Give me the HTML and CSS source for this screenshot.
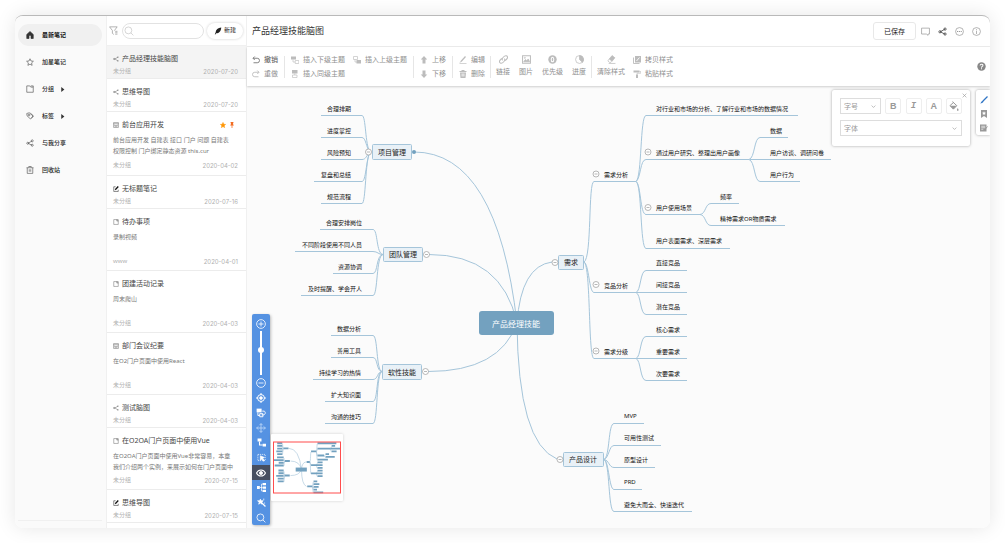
FILE: index.html
```html
<!DOCTYPE html>
<html lang="zh-CN">
<head>
<meta charset="utf-8">
<title>产品经理技能脑图</title>
<link rel="stylesheet" href="styles.css">
</head>
<body>
<svg class="sprite" aria-hidden="true">
  <symbol id="i-home" viewBox="0 0 16 16"><path fill="currentColor" d="M8 1 1.500 7v8h4.500v-4.500a2 2 0 0 1 4 0V15h4.500V7z"/></symbol>
  <symbol id="i-star" viewBox="0 0 16 16"><path d="m8 1.500 2 4.500 4.800.5-3.600 3.300 1 4.900L8 12.300l-4.200 2.400 1-4.900L1.200 6.500 6 6z"/></symbol>
  <symbol id="i-folder" viewBox="0 0 16 16"><path d="M1.500 1.800h6l2 2.400h5v10.300h-13zM9.500 1.800h5v2.400"/></symbol>
  <symbol id="i-tag" viewBox="0 0 16 16"><path d="M1.500 3 6.500 1.500 14 8l-5 6-7-6.500zM9 2.500l6 5.300-4 5"/><circle cx="6" cy="6" r="1.800"/></symbol>
  <symbol id="i-share" viewBox="0 0 16 16"><path d="M4 8.500 12 4M4 8.500l8 4"/><circle cx="3.500" cy="8.500" r="2"/><circle cx="12.500" cy="3.700" r="2"/><circle cx="12.500" cy="12.500" r="2"/></symbol>
  <symbol id="i-trash" viewBox="0 0 16 16"><path d="M1 3.500h14M5.500 3V1h5v2M2.500 3.500v11.300h11V3.500M6.500 6.500v5M9.500 6.500v5"/></symbol>
  <symbol id="i-caret" viewBox="0 0 8 8"><path fill="currentColor" stroke="none" d="M2 0l5 4-5 4z"/></symbol>
  <symbol id="i-filter" viewBox="0 0 16 16"><path d="M10 8.500V7.500L14.500 1.500H1L6 8v5l2.500 2M11 9.500h4M11 12h4M11 14.500h4"/></symbol>
  <symbol id="i-search" viewBox="0 0 16 16"><circle cx="7" cy="7" r="5.500"/><path d="m11 11 4 4"/></symbol>
  <symbol id="i-quill" viewBox="0 0 16 16"><path fill="currentColor" stroke="none" d="M14.500.8C8 1.500 3.500 5 3.200 11L1.500 14.500l1.200.7L4.300 12.600c6-.2 9.700-4.600 10.200-11.800z"/></symbol>
  <symbol id="i-map" viewBox="0 0 16 16"><path d="M4 8 13 3.500M4 8h1l8 5"/><circle cx="3" cy="8" r="1.800"/><path d="M11.500 3h3M11.500 13h3" stroke-width="2.600"/></symbol>
  <symbol id="i-doc" viewBox="0 0 16 16"><path d="M1.500 1.500h13v13h-13zM1.500 4.500h13M4.500 11V7.500L8 10l3.500-2.500V11M4.500 12.500h7"/></symbol>
  <symbol id="i-page" viewBox="0 0 16 16"><path d="M2 1.500h12v13H2zM10 1.500v4h4M10 2.500l4 2"/></symbol>
  <symbol id="i-edit" viewBox="0 0 16 16"><path d="M7 2H2v12.500h12V10"/><path stroke-width="3.500" d="m6 10 8-8.500"/></symbol>
  <symbol id="i-starfill" viewBox="0 0 16 16"><path fill="currentColor" d="m8 1 2 5 5 .4-3.800 3.300L12.400 15 8 12.200 3.600 15l1.200-5.300L1 6.400 6 6z"/></symbol>
  <symbol id="i-pin" viewBox="0 0 16 16"><path fill="currentColor" stroke="none" d="M4 0h8v2h-1v4l2 3H9v7H7V9H3l2-3V2H4z"/></symbol>
  <symbol id="i-chat" viewBox="0 0 16 16"><path d="M1 2h14v10.500h-2.500v2.300l-3-2.300H1z"/></symbol>
  <symbol id="i-more" viewBox="0 0 16 16"><circle cx="8" cy="8" r="7"/><path d="M3.500 8h9" stroke-width="2" stroke-dasharray="2 1.300"/></symbol>
  <symbol id="i-info" viewBox="0 0 16 16"><circle cx="8" cy="8" r="7"/><path d="M8 3.500v1.500M8 6.500v6"/></symbol>
  <symbol id="i-help" viewBox="0 0 16 16"><circle cx="8" cy="8" r="7.500" fill="currentColor" stroke="none"/><path stroke="#fff" stroke-width="1.800" d="M5.500 6.300C5.500 3 10.700 3.200 10.500 6c0 1.800-2.500 1.800-2.500 4M8 11.300v1.700"/></symbol>
  <symbol id="i-undo" viewBox="0 0 16 16"><path stroke-width="1.800" d="M5.500 1 2 4.500 5.500 8M2 4.500h8.500a4.500 4.500 0 0 1 0 9H3"/></symbol>
  <symbol id="i-redo" viewBox="0 0 16 16"><path stroke-width="1.800" d="M10.500 1 14 4.500 10.500 8M14 4.500H5.500a4.500 4.500 0 0 0 0 9H13"/></symbol>
  <symbol id="i-child" viewBox="0 0 16 16"><path fill="currentColor" stroke="none" d="M0 1h10v6H0z"/><path d="M4 7v5h4M8.500 9h7v6h-7z"/></symbol>
  <symbol id="i-sibling" viewBox="0 0 16 16"><path fill="currentColor" stroke="none" d="M2 0h11v7H2z"/><path d="M7.500 7v3M3 10h9v5H3z"/></symbol>
  <symbol id="i-parent" viewBox="0 0 16 16"><path d="M1 1h8v6H1zM4 7v5h4"/><path fill="currentColor" stroke="none" d="M7 8h9v7H7z"/></symbol>
  <symbol id="i-up" viewBox="0 0 16 16"><path fill="currentColor" stroke="none" d="m8 0 6.500 7H11v8H5V7H1.500z"/></symbol>
  <symbol id="i-down" viewBox="0 0 16 16"><path fill="currentColor" stroke="none" d="m8 16 6.500-7H11V1H5v8H1.500z"/></symbol>
  <symbol id="i-pencil" viewBox="0 0 16 16"><path stroke-width="2.500" d="m4 11 9-10"/><path d="M2 13.500 4 10M1 15h14"/></symbol>
  <symbol id="i-bin" viewBox="0 0 16 16"><path fill="currentColor" stroke="none" d="M5 0h6v2h4v2H1V2h4zM2 5h12l-1 11H3z"/><path stroke="#fff" d="M6 7v6M8 7v6M10 7v6"/></symbol>
  <symbol id="i-link" viewBox="0 0 16 16"><path stroke-width="1.800" d="M6.500 9.500c-3-3 3.500-9 6.500-8s3 4 0 6.500l-2 1.800M9.500 6.500c3 3-3.500 9-6.500 8s-3-4 0-6.500l2-1.800"/></symbol>
  <symbol id="i-image" viewBox="0 0 16 16"><path stroke-width="1.800" d="M1 1.500h14v13H1z"/><path fill="currentColor" d="m3 12 3-4 2.500 2L11 7l2.500 5z"/><circle cx="5" cy="5" r="1"/></symbol>
  <symbol id="i-priority" viewBox="0 0 16 16"><circle cx="8" cy="8" r="7.500" fill="currentColor" stroke="none"/><ellipse cx="8" cy="8" rx="2.300" ry="4" stroke="#fff" stroke-width="1.800"/></symbol>
  <symbol id="i-progress" viewBox="0 0 16 16"><circle cx="8" cy="8" r="7"/><path fill="currentColor" d="M8 1a7 7 0 0 1 5 12L8 8z"/></symbol>
  <symbol id="i-eraser" viewBox="0 0 16 16"><path fill="currentColor" d="m9 1 5 4-5 6-5-4z"/><path d="m4 7-2.500 3.500L4 13h3l2-2M3 15h12"/></symbol>
  <symbol id="i-copy" viewBox="0 0 16 16"><path fill="currentColor" stroke="none" d="M4 0h12v13H4z"/><path stroke-width="1.800" d="M1 3v12h12"/><path stroke="#fff" stroke-width="1.800" d="m7 10 6-7"/></symbol>
  <symbol id="i-roller" viewBox="0 0 16 16"><path fill="currentColor" stroke="none" d="M1 1h12v4H1zM6 9h4v7H6z"/><path d="M13 3h2.500v3.500H8V9"/></symbol>
  <symbol id="i-chev" viewBox="0 0 8 8"><path d="m1 2.500 3 3 3-3"/></symbol>
  <symbol id="i-close" viewBox="0 0 8 8"><path d="m1 1 6 6M7 1 1 7"/></symbol>
  <symbol id="i-fill" viewBox="0 0 16 16"><path stroke-width="1.600" d="M5.500 1 12.500 7.500 7 13 1.500 7.500 7.500 2"/><path fill="currentColor" stroke="none" d="M2 7.500h10L7 13zM14 11c2 3 1.500 4.500 0 4.500s-2-1.500 0-4.500z"/></symbol>
  <symbol id="i-brush" viewBox="0 0 16 16"><path stroke-width="2.600" d="M6 10 15 1"/><path fill="currentColor" stroke="none" d="M6.500 9c1.500 2 0 5-6 6 2-1.500 1.500-5 6-6z"/></symbol>
  <symbol id="i-mark" viewBox="0 0 16 16"><path fill="currentColor" stroke="none" d="M2 0h12v16l-6-4-6 4z"/><path fill="#fff" stroke="none" d="m8 2.500 1.200 2.700 2.800.2-2.100 1.900.6 2.700L8 8.500 5.500 10l.6-2.700L4 5.400l2.800-.2z"/></symbol>
  <symbol id="i-note" viewBox="0 0 16 16"><path fill="currentColor" stroke="none" d="M0 1h13v14H0z"/><path stroke="#fff" d="M2.500 4.500h8M2.500 7.500h8M2.500 10.500h4"/><path stroke-width="2" d="m9 12 6-7"/></symbol>
  <symbol id="i-plus" viewBox="0 0 16 16"><circle cx="8" cy="8" r="7"/><path d="M4 8h8M8 4v8"/></symbol>
  <symbol id="i-minus" viewBox="0 0 16 16"><circle cx="8" cy="8" r="7"/><path d="M4 8h8"/></symbol>
  <symbol id="i-target" viewBox="0 0 16 16"><circle cx="8" cy="8" r="5.500" stroke-width="1.600"/><circle cx="8" cy="8" r="2.200" fill="currentColor"/><path stroke-width="1.600" d="M8 0v3M8 13v3M0 8h3M13 8h3"/></symbol>
  <symbol id="i-drag" viewBox="0 0 16 16"><path fill="currentColor" stroke="none" d="M1 1h8v6H1z"/><path stroke-width="1.500" d="M3 7v5h3M10 5h3c3 1 2 6-1 6H9M6 9h5v5H6z"/></symbol>
  <symbol id="i-move" viewBox="0 0 16 16"><path stroke-width="1.600" d="M8 1v14M1 8h14M5.500 3.500 8 1l2.500 2.500M5.500 12.500 8 15l2.500-2.500M3.500 5.500 1 8l2.500 2.500M12.500 5.500 15 8l-2.500 2.500"/></symbol>
  <symbol id="i-step" viewBox="0 0 16 16"><path fill="currentColor" stroke="none" d="M1 1h7v5H1zM10 10h6v5h-6z"/><path stroke-width="2" d="M4.500 6v6.500H10"/></symbol>
  <symbol id="i-select" viewBox="0 0 16 16"><path stroke-dasharray="2 1.500" d="M1.500 2.500h13v11h-13z"/><path fill="currentColor" d="m6 5 7 3-3 1.500 3 4-1.500 1-3-4L6 13z"/></symbol>
  <symbol id="i-eye" viewBox="0 0 16 16"><path stroke-width="1.700" d="M.8 8C4 1.500 12 1.500 15.200 8 12 14.500 4 14.500.8 8z"/><circle cx="8" cy="8" r="2.500" fill="currentColor"/></symbol>
  <symbol id="i-tree" viewBox="0 0 16 16"><path fill="currentColor" stroke="none" d="M0 5.500h5v5H0zM10 0h6v4h-6zM10 6h6v4h-6zM10 12h6v4h-6z"/><path d="M5 8h5M10 2H8v12h2"/></symbol>
  <symbol id="i-wand" viewBox="0 0 16 16"><path stroke-width="2.200" d="m7 7 8 8"/><path fill="currentColor" d="m6 2 1.200 3L11 5 8 7.500l1 3.500-3-2-3 2 1-3.500L1 5h3.800zM12 1v3M13.500 8v2"/></symbol>
</svg>

<div class="app">
  <nav class="side">
    <a class="side-item active" href="#"><svg class="ico"><use href="#i-home"/></svg>最新笔记</a>
    <a class="side-item" href="#"><svg class="ico"><use href="#i-star"/></svg>加星笔记</a>
    <a class="side-item" href="#"><svg class="ico"><use href="#i-folder"/></svg>分组<svg class="caret"><use href="#i-caret"/></svg></a>
    <a class="side-item" href="#"><svg class="ico"><use href="#i-tag"/></svg>标签<svg class="caret"><use href="#i-caret"/></svg></a>
    <a class="side-item" href="#"><svg class="ico"><use href="#i-share"/></svg>与我分享</a>
    <a class="side-item" href="#"><svg class="ico"><use href="#i-trash"/></svg>回收站</a>
    <div class="side-foot"></div>
  </nav>

  <section class="list">
    <div class="list-head">
      <button class="plain" aria-label="筛选"><svg class="ico-lg"><use href="#i-filter"/></svg></button>
      <label class="search"><svg class="ico-xl"><use href="#i-search"/></svg><input type="search" aria-label="搜索"></label>
      <button class="new"><svg class="ico"><use href="#i-quill"/></svg>新建</button>
    </div>
    <div class="notes">
      <article class="note selected"><h2><svg class="ico-sm"><use href="#i-map"/></svg>产品经理技能脑图</h2><footer><span>未分组</span><time>2020-07-20</time></footer></article>
      <article class="note"><h2><svg class="ico-sm"><use href="#i-map"/></svg>思维导图</h2><footer><span>未分组</span><time>2020-07-20</time></footer></article>
      <article class="note tall pinned"><h2><svg class="ico-sm"><use href="#i-doc"/></svg>前台应用开发<span class="flags"><svg class="ico-sm"><use href="#i-starfill"/></svg><svg class="ico-sm pin"><use href="#i-pin"/></svg></span></h2><p>前台应用开发 自建表 接口 门户 问题 自建表<br>权限控制 门户绑定静态资源 this.cur</p><footer><span>未分组</span><time>2020-04-02</time></footer></article>
      <article class="note"><h2><svg class="ico-sm dark"><use href="#i-edit"/></svg>无标题笔记</h2><footer><span>未分组</span><time>2020-07-16</time></footer></article>
      <article class="note tall"><h2><svg class="ico-sm"><use href="#i-page"/></svg>待办事项</h2><p>录制视频</p><footer><span>www</span><time>2020-04-01</time></footer></article>
      <article class="note tall"><h2><svg class="ico-sm"><use href="#i-page"/></svg>团建活动记录</h2><p>周末爬山</p><footer><span>未分组</span><time>2020-04-03</time></footer></article>
      <article class="note tall"><h2><svg class="ico-sm"><use href="#i-doc"/></svg>部门会议纪要</h2><p>在O2门户页面中使用React</p><footer><span>未分组</span><time>2020-04-03</time></footer></article>
      <article class="note"><h2><svg class="ico-sm"><use href="#i-map"/></svg>测试脑图</h2><footer><span>未分组</span><time>2020-04-03</time></footer></article>
      <article class="note tall"><h2><svg class="ico-sm"><use href="#i-page"/></svg>在O2OA门户页面中使用Vue</h2><p>在O2OA门户页面中使用Vue非常容易，本章<br>我们介绍两个实例，来展示如何在门户页面中</p><footer><span>未分组</span><time>2020-07-15</time></footer></article>
      <article class="note"><h2><svg class="ico-sm dark"><use href="#i-edit"/></svg>思维导图</h2><footer><span>未分组</span><time>2020-07-15</time></footer></article>
    </div>
  </section>

  <main class="main">
    <header class="head">
      <h1>产品经理技能脑图</h1>
      <button class="saved">已保存</button>
      <div class="head-icons">
        <button class="plain" aria-label="评论"><svg class="ico-lg"><use href="#i-chat"/></svg></button>
        <button class="plain dark" aria-label="分享"><svg class="ico-lg"><use href="#i-share"/></svg></button>
        <button class="plain" aria-label="更多"><svg class="ico-lg"><use href="#i-more"/></svg></button>
        <button class="plain" aria-label="信息"><svg class="ico-lg"><use href="#i-info"/></svg></button>
      </div>
    </header>

    <div class="tools">
      <div class="stack"><button class="tool on"><svg class="ico"><use href="#i-undo"/></svg>撤销</button><button class="tool"><svg class="ico"><use href="#i-redo"/></svg>重做</button></div>
      <i class="sep"></i>
      <div class="stack"><button class="tool"><svg class="ico"><use href="#i-child"/></svg>插入下级主题</button><button class="tool"><svg class="ico"><use href="#i-sibling"/></svg>插入同级主题</button></div>
      <div class="stack next"><button class="tool"><svg class="ico"><use href="#i-parent"/></svg>插入上级主题</button></div>
      <i class="sep"></i>
      <div class="stack"><button class="tool"><svg class="ico"><use href="#i-up"/></svg>上移</button><button class="tool"><svg class="ico"><use href="#i-down"/></svg>下移</button></div>
      <i class="sep"></i>
      <div class="stack"><button class="tool"><svg class="ico"><use href="#i-pencil"/></svg>编辑</button><button class="tool"><svg class="ico"><use href="#i-bin"/></svg>删除</button></div>
      <i class="sep tight"></i>
      <div class="wide">
        <button class="tool big"><svg class="ico-lg"><use href="#i-link"/></svg>链接</button>
        <button class="tool big"><svg class="ico-lg"><use href="#i-image"/></svg>图片</button>
        <button class="tool big"><svg class="ico-lg"><use href="#i-priority"/></svg>优先级</button>
        <button class="tool big"><svg class="ico-lg"><use href="#i-progress"/></svg>进度</button>
      </div>
      <i class="sep tight"></i>
      <button class="tool big"><svg class="ico-lg"><use href="#i-eraser"/></svg>清除样式</button>
      <div class="stack next"><button class="tool"><svg class="ico"><use href="#i-copy"/></svg>拷贝样式</button><button class="tool"><svg class="ico"><use href="#i-roller"/></svg>粘贴样式</button></div>
      <button class="plain help" aria-label="帮助"><svg class="ico-lg"><use href="#i-help"/></svg></button>
    </div>

    <div class="canvas">
      <svg class="map" width="743" height="442" viewBox="247 86 743 442">
        <defs>
          <path id="leaves" d="M321 115.500H362M321 137.500H362M321 159.500H362M314 181.500H362M321 203.500H362
            M320 229.500H373M295 251.500H373M333 273.500H373M301 295.500H373
            M331 335.500H373M331 357.500H373M313 379.500H373M325 401.500H373M325 423.500H373
            M594 181.500H636M594 292.500H636M594 358.500H636
            M646 115.500H798M646 159.500H749M646 214.500H700M646 248.500H730
            M760 137.500H788M750 159.500H831M760 181.500H800M711 203.500H739M711 225.500H785
            M646 270.500H687M636 292.500H687M646 314.500H687M646 336.500H687M636 358.500H687M646 380.500H687
            M614 423.500H644M614 445.500H661M614 467.500H655M614 489.500H642M614 511.500H692"/>
          <path id="links" d="M362 115.500C366 115.500 365 145 370 152M362 137.500C366 137.500 366 148 370 152M362 159.500C366 159.500 366 156 370 152M362 181.500C366 181.500 366 160 370 152M362 203.500C366 203.500 365 160 370 152
            M373 229.500C378 229.500 376 254 383 254.500M373 251.500C378 251.500 378 254.500 383 254.500M373 273.500C378 273.500 376 255 383 254.500M373 295.500C378 295.500 376 255 383 254.500
            M373 335.500C378 335.500 376 371 382 371.500M373 357.500C378 357.500 376 371 382 371.500M373 379.500C378 379.500 377 372 382 371.500M373 401.500C378 401.500 376 372 382 371.500M373 423.500C378 423.500 376 372 382 371.500
            M584 262C592 258 588 181.500 594 181.500M584 262C589 264 589 292.500 594 292.500M584 262C591 266 588 358.500 594 358.500
            M636 181.500C642 178 640 115.500 646 115.500M636 181.500C641 178 640 159.500 646 159.500M636 181.500C641 184 640 214.500 646 214.500M636 181.500C642 184 640 248.500 646 248.500
            M749 159.500C755 158 754 137.500 760 137.500M749 159.500C755 161 754 181.500 760 181.500
            M700 214.500C706 214 705 203.500 711 203.500M700 214.500C706 215 705 225.500 711 225.500
            M636 292.500C641 291 640 270.500 646 270.500M636 292.500C641 294 640 314.500 646 314.500M636 358.500C641 357 640 336.500 646 336.500M636 358.500C641 360 640 380.500 646 380.500
            M604 459.500C610 457 608 423.500 614 423.500M604 459.500C609 458 609 445.500 614 445.500M604 459.500C609 460 609 467.500 614 467.500M604 459.500C609 461 609 489.500 614 489.500M604 459.500C610 462 608 511.500 614 511.500
            M517 323Q497 152 414 152M517 323Q502 254.500 429 254.500M517 323Q500 371.500 428 371.500M517 323Q521 266 552 262M517 323Q518 443 557 459"/>
        </defs>
        <use class="wire" href="#leaves"/>
        <use class="wire" href="#links"/>
        <g class="hub">
          <rect x="372.500" y="144.500" width="39" height="15" rx="1"/><rect x="383.500" y="247.500" width="39" height="14" rx="1"/><rect x="382.500" y="364.500" width="39" height="15" rx="1"/><rect x="558.500" y="255.500" width="25" height="14" rx="1"/><rect x="563.500" y="452.500" width="40" height="14" rx="1"/>
        </g>
        <circle class="dot" cx="414" cy="152" r="2"/>
        <rect class="root" x="479" y="311" width="75" height="24" rx="3"/>
        <text class="root-text" x="516" y="327">产品经理技能</text>
        <g class="hub-text"><text x="392" y="155">项目管理</text><text x="403" y="257">团队管理</text><text x="402" y="375">软性技能</text><text x="571" y="265">需求</text><text x="583" y="462">产品设计</text></g>
        <g class="leaf end">
          <text x="351" y="111">合理排期</text><text x="351" y="133">进度掌控</text><text x="351" y="155">风险预知</text><text x="351" y="177">复盘和总结</text><text x="351" y="199">规范流程</text>
          <text x="362" y="225">合理安排岗位</text><text x="362" y="247">不同阶段使用不同人员</text><text x="362" y="269">资源协调</text><text x="362" y="291">及时提醒、学会开人</text>
          <text x="361" y="331">数据分析</text><text x="361" y="353">善用工具</text><text x="361" y="375">持续学习的热情</text><text x="361" y="397">扩大知识面</text><text x="361" y="419">沟通的技巧</text>
        </g>
        <g class="leaf">
          <text x="604" y="177">需求分析</text><text x="604" y="288">竞品分析</text><text x="604" y="354">需求分级</text>
          <text x="656" y="111">对行业和市场的分析、了解行业和市场的数据情况</text><text x="656" y="155">通过用户研究、整理出用户画像</text><text x="656" y="210">用户使用场景</text><text x="656" y="243">用户表面需求、深层需求</text>
          <text x="770" y="133">数据</text><text x="770" y="155">用户访谈、调研问卷</text><text x="770" y="177">用户行为</text><text x="720" y="199">频率</text><text x="720" y="221">精神需求OR物质需求</text>
          <text x="656" y="265">直接竞品</text><text x="656" y="287">间接竞品</text><text x="656" y="309">潜在竞品</text><text x="656" y="332">核心需求</text><text x="656" y="354">重要需求</text><text x="656" y="376">次要需求</text>
          <text x="624" y="418">MVP</text><text x="624" y="440">可用性测试</text><text x="624" y="462">原型设计</text><text x="624" y="484">PRD</text><text x="624" y="507">避免大而全、快速迭代</text>
        </g>
        <g class="toggle">
          <circle cx="368.500" cy="152" r="3"/><circle cx="426.500" cy="254.500" r="3"/><circle cx="425.500" cy="371.500" r="3"/><circle cx="555" cy="262.500" r="3"/><circle cx="560" cy="459.500" r="3"/><circle cx="596" cy="174" r="3"/><circle cx="596" cy="284.500" r="3"/><circle cx="596" cy="351" r="3"/><circle cx="648" cy="152" r="3"/><circle cx="648" cy="207.500" r="3"/>
          <path d="M367 152h3M425 254.500h3M424 371.500h3M553.500 262.500h3M558.500 459.500h3M594.500 174h3M594.500 284.500h3M594.500 351h3M646.500 152h3M646.500 207.500h3"/>
        </g>
      </svg>

      <div class="dock">
        <div class="dock-bar">
          <button class="dock-btn" aria-label="放大"><svg class="ico-xl"><use href="#i-plus"/></svg></button>
          <input class="slider" type="range" min="0" max="100" value="42" aria-label="缩放">
          <button class="dock-btn" aria-label="缩小"><svg class="ico-xl"><use href="#i-minus"/></svg></button>
          <button class="dock-btn" aria-label="居中"><svg class="ico-xl"><use href="#i-target"/></svg></button>
          <button class="dock-btn" aria-label="拖动"><svg class="ico-xl"><use href="#i-drag"/></svg></button>
          <button class="dock-btn faded" aria-label="移动"><svg class="ico-xl"><use href="#i-move"/></svg></button>
          <button class="dock-btn" aria-label="展开"><svg class="ico-lg"><use href="#i-step"/></svg></button>
          <button class="dock-btn" aria-label="选择"><svg class="ico-lg"><use href="#i-select"/></svg></button>
          <button class="dock-btn current" aria-label="预览"><svg class="ico-xl"><use href="#i-eye"/></svg></button>
          <button class="dock-btn" aria-label="结构"><svg class="ico-lg"><use href="#i-tree"/></svg></button>
          <button class="dock-btn" aria-label="主题"><svg class="ico-lg"><use href="#i-wand"/></svg></button>
          <button class="dock-btn" aria-label="查找"><svg class="ico-xl"><use href="#i-search"/></svg></button>
        </div>
        <svg class="preview" width="72" height="67" viewBox="271 434 72 67">
          <g transform="translate(237.400 429.500) scale(.124)">
            <use class="mini-wire" href="#links"/>
            <use class="mini-leaf" href="#leaves" y="-5"/>
            <path class="mini-leaf" d="M372 152h40M383 254h40M382 371h40M558 262h26M563 459h40"/>
            <rect class="root" x="470" y="307" width="90" height="32"/>
          </g>
          <rect class="mini-view" x="273.500" y="442" width="67" height="51"/>
        </svg>
      </div>

      <form class="format">
        <button class="plain close" type="button" aria-label="关闭"><svg class="caret"><use href="#i-close"/></svg></button>
        <div class="format-row">
          <label class="pick size"><select aria-label="字号"><option>字号</option></select><svg class="caret"><use href="#i-chev"/></svg></label>
          <button class="fmt" type="button">B</button>
          <button class="fmt italic" type="button">I</button>
          <button class="fmt" type="button">A</button>
          <button class="fmt" type="button" aria-label="填充"><svg class="ico-xl"><use href="#i-fill"/></svg></button>
        </div>
        <label class="pick"><select aria-label="字体"><option>字体</option></select><svg class="caret"><use href="#i-chev"/></svg></label>
      </form>

      <div class="tabs">
        <button class="plain blue" aria-label="样式"><svg class="ico"><use href="#i-brush"/></svg></button>
        <button class="plain" aria-label="标记"><svg class="ico"><use href="#i-mark"/></svg></button>
        <button class="plain" aria-label="备注"><svg class="ico"><use href="#i-note"/></svg></button>
      </div>
    </div>
  </main>
</div>
</body>
</html>
```

FILE: styles.css
```css
* { box-sizing: border-box; }
body {
  margin: 0;
  padding: 15px;
  background: #fff;
  color: #444;
  font: 6px/9px "Noto Sans", "Noto Sans CJK SC", sans-serif;
}
h1, h2, p { margin: 0; font-weight: 400; }
button, input, select { font: inherit; color: inherit; margin: 0; padding: 0; border: 0; background: none; }
svg { display: block; flex: none; fill: none; stroke: currentColor; stroke-width: 1.3; }
text { stroke: none; }
.sprite { position: absolute; width: 0; height: 0; }
.ico { width: 8px; height: 8px; }
.ico-lg { width: 9px; height: 9px; }
.ico-xl { width: 10px; height: 10px; }
.ico-sm { width: 6px; height: 6px; }
.caret { width: 5px; height: 5px; stroke-width: 1; }
.plain { display: flex; color: #999; }
.dark { color: #333; }

.app {
  display: flex;
  height: calc(100vh - 30px);
  border-top: 1px solid #b9b9b9;
  border-radius: 8px;
  overflow: hidden;
  background: #fff;
  box-shadow: 0 0 20px rgba(0, 0, 0, .1);
}

.side { flex: 0 0 91px; display: flex; flex-direction: column; gap: 5px; padding: 8px 4px 7px 3px; background: #fafafa; }
.side-item { display: flex; align-items: center; height: 22px; padding-left: 8px; border-radius: 11px; color: #222; text-decoration: none; font-weight: 500; }
.side-item .ico { margin-right: 8px; color: #555; }
.side-item .caret { margin-left: 6px; color: #333; }
.side-item.active { background: #f0f0f0; color: #111; font-weight: 700; }
.side-item.active .ico { color: #333; }
.side-foot { margin-top: auto; border-bottom: 1px solid #f0f0f0; }

.list { flex: 0 0 141px; min-width: 0; display: flex; flex-direction: column; border: solid #f0f0f0; border-width: 0 1px; }
.list-head { display: flex; align-items: center; gap: 3px; height: 30px; flex: none; padding: 0 3px 0 2px; border-bottom: 1px solid #f0f0f0; }
.search { flex: 1; display: flex; align-items: center; min-width: 0; height: 16px; margin-left: 1px; padding: 0 1px; border: 1px solid #e2e2e2; border-radius: 8px; color: #ccc; }
.search input { flex: 1; width: 0; min-width: 0; outline: 0; }
.new { display: flex; align-items: center; gap: 2px; height: 16px; padding: 0 7px; border-radius: 8px; color: #222; white-space: nowrap; box-shadow: 0 0 3px rgba(0, 0, 0, .2); }
.notes { flex: 1; overflow: hidden; }
.note { display: flex; flex-direction: column; height: 33px; padding: 7px 8px 2px 6px; border-bottom: 1px solid #ececec; }
.note.selected { background: #f4f4f4; }
.note.tall { height: 62px; padding-bottom: 4px; }
.note.pinned { height: 64px; padding-bottom: 5px; }
.note h2 { display: flex; align-items: center; gap: 3px; font-size: 7px; line-height: 11px; }
.note h2 > .ico-sm { color: #666; }
.note h2 > .dark { color: #111; }
.flags { display: flex; gap: 3px; margin-left: auto; margin-right: 3px; color: #ff9500; }
.pin { color: #f36c21; }
.note p { margin-top: 5px; color: #777; line-height: 11px; white-space: nowrap; }
.note footer { display: flex; justify-content: space-between; margin-top: auto; color: #b0b0b0; }
.note time { font-family: Inter, sans-serif; }

.main { flex: 1; min-width: 0; display: flex; flex-direction: column; }
.head { display: flex; align-items: center; flex: none; height: 31px; padding: 0 9px 0 5px; border-bottom: 1px solid #ededed; }
.head h1 { font-size: 9px; line-height: 12px; color: #333; }
.saved { margin-left: auto; height: 18px; padding: 0 10px; border: 1px solid #e8e8e8; border-radius: 3px; font-size: 7px; color: #222; }
.head-icons { display: flex; gap: 8px; margin-left: 5px; }
.head-icons .dark { color: #333; }
.tools { display: flex; align-items: center; flex: none; height: 39px; padding: 0 4px 0 5px; position: relative; z-index: 1; box-shadow: 0 1px 2px rgba(0, 0, 0, .18); }
.stack { display: flex; flex-direction: column; height: 28px; }
.next { margin-left: 8px; }
.tool { display: flex; align-items: center; gap: 4px; height: 14px; font-size: 7px; color: #8f8f8f; white-space: nowrap; }
.tool svg { color: #bcbcbc; }
.tool.on { color: #555; }
.tool.on svg { color: #777; }
.tool.big { flex-direction: column; height: 28px; gap: 2px; padding-top: 2px; line-height: 11px; }
.wide { display: flex; gap: 9px; }
.sep { width: 1px; height: 22px; margin: 0 6px; background: #e6e6e6; }
.sep.tight { margin: 0 5px; }
.help { margin-left: auto; color: #888; }

.canvas { flex: 1; position: relative; overflow: hidden; background: #fbfbfb; }
.wire { stroke: #a5c5da; stroke-width: 1; }
.hub { fill: #e9f1f7; stroke: #a5c5da; stroke-width: 1; }
.root { fill: #73a1bf; stroke: none; }
.dot { fill: #73a1bf; stroke: none; }
.root-text { fill: #fff; font-size: 8px; text-anchor: middle; }
.hub-text { fill: #222; font-size: 7px; text-anchor: middle; }
.leaf { fill: #111; font-size: 6px; }
.leaf.end { text-anchor: end; }
.toggle { fill: #fff; stroke: #999; stroke-width: .7; }

.dock { position: absolute; left: 5px; bottom: 3px; display: flex; align-items: flex-end; gap: 1px; }
.dock-bar { display: flex; flex-direction: column; align-items: center; width: 18px; padding: 2px 0 0; border-radius: 2px; background: #5592e2; color: #fff; box-shadow: 1px 1px 3px rgba(0, 0, 0, .25); }
.dock-btn { display: flex; align-items: center; justify-content: center; width: 100%; height: 15px; }
.faded { color: #b3d0f5; }
.current { background: #474f60; }
.slider { appearance: none; writing-mode: vertical-lr; width: 8px; height: 44px; background: linear-gradient(#fff, #fff) center / 2px 100% no-repeat; }
.slider::-webkit-slider-thumb { appearance: none; width: 6px; height: 6px; border-radius: 3px; background: #fff; }
.preview { margin-bottom: 24px; background: #fff; border-radius: 1px; box-shadow: 0 0 3px rgba(0, 0, 0, .18); }
.mini-wire { stroke: #a5c5da; stroke-width: 5; }
.mini-leaf { stroke: #73a1bf; stroke-width: 15; }
.mini-view { stroke: #ff4d4d; stroke-width: 1; }

.format { position: absolute; top: 4px; right: 20px; display: flex; flex-direction: column; gap: 6px; width: 138px; padding: 8px 8px 10px; border-radius: 2px; background: #fff; box-shadow: 0 0 3px rgba(0, 0, 0, .35); }
.close { position: absolute; top: 3px; right: 3px; }
.format-row { display: flex; justify-content: space-between; }
.pick { display: flex; align-items: center; height: 16px; padding: 0 4px 0 3px; border: 1px solid #ddd; color: #999; font-size: 7px; }
.pick.size { width: 41px; }
.pick select { appearance: none; flex: 1; min-width: 0; }
.fmt { display: flex; align-items: center; justify-content: center; width: 16px; height: 16px; border: 1px solid #eee; border-radius: 2px; color: #999; font: 700 9px/10px "Liberation Sans", Arial, sans-serif; }
.italic { font-family: "Liberation Mono", monospace; font-style: italic; }
.tabs { position: absolute; top: 4px; right: 0; display: flex; flex-direction: column; gap: 6px; width: 14px; padding: 6px 2px 3px 4px; border-radius: 2px 0 0 2px; background: #fff; box-shadow: 0 0 3px rgba(0, 0, 0, .35); }
.blue { color: #2f75c5; }
```
